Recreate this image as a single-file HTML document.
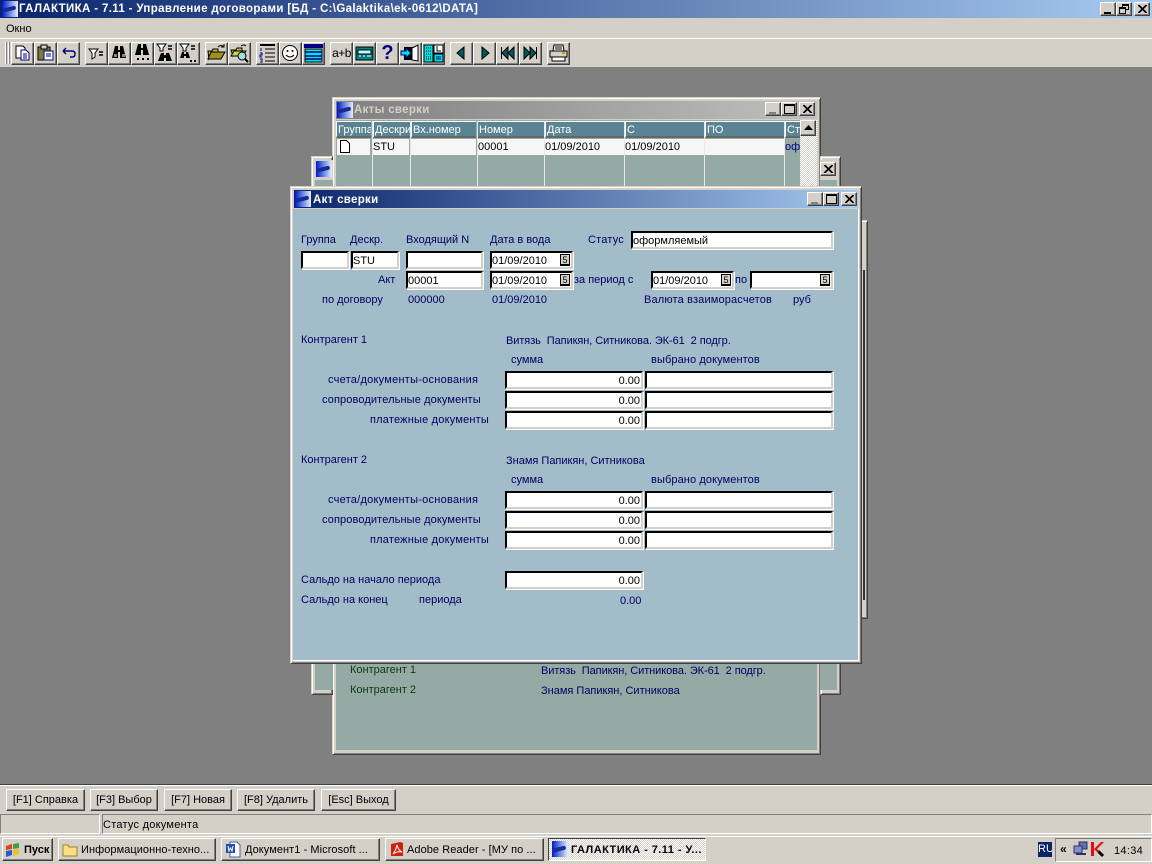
<!DOCTYPE html>
<html><head><meta charset="utf-8"><style>
html,body{margin:0;padding:0;width:1152px;height:864px;overflow:hidden;background:#808080;font-family:"Liberation Sans",sans-serif;font-size:11px;color:#000}
div,svg{position:absolute;box-sizing:border-box}
.t{white-space:pre;line-height:14px;height:14px;color:#000060;margin-top:1px}
.g{color:#0c3a0c}
.k{color:#000}
.b{background:#d4d0c8;border:1px solid;border-color:#fff #404040 #404040 #fff;box-shadow:inset -1px -1px 0 #808080;width:23px;height:23px;top:42px}
.bb{background:#d4d0c8;border:1px solid;border-color:#fff #404040 #404040 #fff;box-shadow:inset -1px -1px 0 #808080;height:22px;top:789px;text-align:center;line-height:20px;white-space:pre;letter-spacing:0}
.tb{background:#d4d0c8;border:1px solid;border-color:#fff #404040 #404040 #fff;box-shadow:inset -1px -1px 0 #808080;height:23px;top:838px;line-height:23px;white-space:pre;font-size:11px;letter-spacing:.06px}
.w{border:1px solid;border-color:#d4d0c8 #404040 #404040 #d4d0c8;background:#d4d0c8;box-shadow:inset 1px 1px 0 #fff,inset -1px -1px 0 #808080}
.f{background:#fff;border:2px solid;border-color:#000 #d4d0c8 #d4d0c8 #000;box-shadow:1px 1px 0 #fff;height:18px;line-height:16px;white-space:pre;color:#000;padding-left:0;width:10px}
.r{text-align:right;padding-right:1px}
.d{width:83px}
.c{position:absolute;right:1px;top:1px;width:10px;height:12px;border:1px solid #000;border-width:1px 1px 2px 1px;background:#d4d0c8;font-size:9px;line-height:10px;text-align:center}
.wb{background:#d4d0c8;border:1px solid;border-color:#fff #404040 #404040 #fff;box-shadow:inset -1px -1px 0 #808080;width:16px;height:14px}
.ic{width:16px;height:16px;background:linear-gradient(90deg,#0018d0,#6080e0 45%,#e8ecff);overflow:hidden}
.ic:after{content:"";position:absolute;left:1px;top:6px;width:13px;height:4px;background:#1a2a90;transform:rotate(-14deg);border-radius:2px}
.th{background:#5a8494;color:#fff;height:17px;top:121px;line-height:17px;white-space:pre;overflow:hidden;border-left:1px solid #fff;border-top:1px solid #fff;border-bottom:2px solid #666;padding-left:1px}
.tc{background:#f6f6f6;height:16px;top:139px;line-height:17px;white-space:pre;overflow:hidden;color:#000}
.v{background:#fff;width:1px;top:121px;height:65px;background:#e8e8e8}
</style></head><body>

<!-- main title -->
<div style="left:0;top:0;width:1152px;height:18px;background:linear-gradient(90deg,#0a246a,#a6caf0)"></div>
<div class="ic" style="left:2px;top:1px"></div>
<div style="left:19px;top:1px;height:16px;line-height:16px;color:#fff;font-weight:bold;font-size:11.5px;white-space:pre;letter-spacing:.35px">ГАЛАКТИКА - 7.11 - Управление договорами [БД - C:\Galaktika\ek-0612\DATA]</div>
<div class="wb" style="left:1100px;top:2px"><div style="left:3px;top:9px;width:7px;height:2px;background:#000"></div></div>
<div class="wb" style="left:1116px;top:2px"><div style="left:5px;top:1px;width:7px;height:6px;border:1px solid #000;border-top-width:2px"></div><div style="left:2px;top:4px;width:7px;height:7px;border:1px solid #000;border-top-width:2px;background:#d4d0c8"></div></div>
<div class="wb" style="left:1134px;top:2px"><svg style="left:3px;top:2px" width="9" height="8"><path d="M0 0L8 8M1 0L9 8M8 0L0 8M9 0L1 8" stroke="#000"/></svg></div>

<!-- menu -->
<div style="left:0;top:18px;width:1152px;height:20px;background:#d4d0c8"></div>
<div style="left:6px;top:22px;line-height:14px;color:#000;white-space:pre">Окно</div>
<!-- toolbar -->
<div style="left:0;top:38px;width:1152px;height:30px;background:#d4d0c8;border-top:1px solid #fff;border-bottom:1px solid #808080"></div>
<div style="left:5px;top:42px;width:2px;height:22px;background:#fff;border-right:1px solid #808080"></div>
<div style="left:8px;top:42px;width:2px;height:22px;background:#fff;border-right:1px solid #808080"></div>

<div class="b" style="left:11px"><svg width="21" height="21"><path d="M4 3h7l2 2v10H4z" fill="#fff" stroke="#000"/><path d="M9 7h5l3 3v7H9z" fill="#fff" stroke="#000080"/><path d="M11 11h4M11 13h4M11 15h4" stroke="#000080"/></svg></div>
<div class="b" style="left:34px"><svg width="21" height="21"><path d="M3 4h12v13H3z" fill="#807840" stroke="#000"/><path d="M6 2h6v4H6z" fill="#d4d0c8" stroke="#000"/><path d="M9 8h9v9H9z" fill="#fff" stroke="#000080"/><path d="M11 11h5M11 13h5" stroke="#000080"/></svg></div>
<div class="b" style="left:57px"><svg width="21" height="21"><path d="M5 8l3-3M5 8l3 3M5 8h9q3 0 3 3t-3 3h-2" fill="none" stroke="#000080" stroke-width="1.4"/></svg></div>

<div class="b" style="left:85px"><svg width="21" height="21"><path d="M3 6h9L9 10v4l-3 2v-6z" fill="#fff" stroke="#000"/><path d="M13 9h4M13 12h4" stroke="#000" stroke-width="1.4"/></svg></div>
<div class="b" style="left:108px"><svg width="21" height="21"><path d="M6 3h3v4h2V3h3l3 12h-6V9h-2v6H3z" fill="#000"/><path d="M5 11h3v3H5zM13 11h3v3h-3z" fill="#888"/></svg></div>
<div class="b" style="left:131px"><svg width="21" height="21"><path d="M6 1h3v4h2V1h3l3 11h-6V7h-2v5H3z" fill="#000"/><path d="M5 15h2v2H5zM10 15h2v2h-2zM15 15h2v2h-2z" fill="#000"/></svg></div>
<div class="b" style="left:154px"><svg width="21" height="21"><path d="M2 1h9L8 5v3H5V5z" fill="#fff" stroke="#000"/><path d="M13 3h4M13 6h4" stroke="#000" stroke-width="1.4"/><path d="M6 10h3v2h2v-2h3l3 8h-6v-3H9v3H3z" fill="#000"/></svg></div>
<div class="b" style="left:177px"><svg width="21" height="21"><path d="M2 1h9L8 5v3H5V5z" fill="#fff" stroke="#000"/><path d="M13 3h4M13 6h4" stroke="#000" stroke-width="1.4"/><path d="M4 9h2v2h2V9h2l2 6H8v-2H6v2H2z" fill="#000"/><path d="M12 17h2v2h-2zM16 17h2v2h-2z" fill="#000"/></svg></div>

<div class="b" style="left:205px"><svg width="21" height="21"><path d="M2 8h4l1-2h5v3H6l-3 7z" fill="#c8b840" stroke="#000"/><path d="M2 16l3-7h14l-4 7z" fill="#a09020" stroke="#000"/><path d="M12 4q3-3 6 0M18 1v3h-3" fill="none" stroke="#000"/></svg></div>
<div class="b" style="left:228px"><svg width="21" height="21"><path d="M2 7h5l1-2h5v3H6l-2 5z" fill="#c8b840" stroke="#000"/><path d="M2 13l3-5h12l-3 5z" fill="#e0d050" stroke="#000"/><circle cx="13" cy="13" r="4" fill="#a0e0e0" stroke="#000"/><path d="M16 16l3 3" stroke="#000" stroke-width="2"/><path d="M12 3q3-2 5 0" fill="none" stroke="#000"/></svg></div>

<div class="b" style="left:256px"><svg width="21" height="21"><path d="M3 2h15" stroke="#000" stroke-width="2"/><path d="M8 6h10M8 10h10M8 14h10M8 18h10" stroke="#000"/><path d="M4 5v3M3 10h2v2H3v2h2M3 16h2v3H3" stroke="#000080" fill="none"/></svg></div>
<div class="b" style="left:279px"><svg width="21" height="21"><circle cx="10" cy="10" r="7.5" fill="#fff" stroke="#000"/><circle cx="7.5" cy="8" r="1"/><circle cx="12.5" cy="8" r="1"/><path d="M6 12q4 4 8 0" fill="none" stroke="#000"/></svg></div>
<div class="b" style="left:302px"><svg width="21" height="21"><path d="M1 1h19v4H1z" fill="#000080"/><path d="M2 6h17v13H2z" fill="#00e0e0" stroke="#000"/><path d="M2 9h17M2 13h17M2 16h17" stroke="#000080" stroke-width="1.6"/></svg></div>

<div class="b" style="left:330px;font-size:12px;text-align:center;line-height:20px;white-space:pre;letter-spacing:-.5px">a+b</div>
<div class="b" style="left:353px"><svg width="21" height="21"><path d="M2 4h17v13H2z" fill="#008080" stroke="#000"/><path d="M4 7h13v4H4z" fill="#c0ffff" stroke="#000"/><path d="M5 13h2M9 13h2M13 13h4" stroke="#fff"/></svg></div>
<div class="b" style="left:376px;color:#000080;font:bold 20px/20px 'Liberation Sans',sans-serif;text-align:center">?</div>
<div class="b" style="left:399px"><svg width="21" height="21"><path d="M4 4h12v13H4z" fill="#000"/><path d="M12 5l6-3v16l-6-1z" fill="#fff" stroke="#000"/><path d="M1 8h5V5l5 5-5 5v-3H1z" fill="#00e0e0" stroke="#000080"/></svg></div>
<div class="b" style="left:422px"><svg width="21" height="21"><path d="M1 2h9v17H1z" fill="#00e0e0" stroke="#000"/><path d="M3 5h5M3 8h5M3 11h5M3 14h5M3 16h5" stroke="#000" stroke-dasharray="1 1"/><path d="M11 2h9v8h-9z" fill="#fff" stroke="#000"/><path d="M14 3v5h4" fill="none" stroke="#000"/><path d="M11 11h9v8h-9z" fill="#00e0e0" stroke="#000"/><path d="M13 14h5M13 16h5" stroke="#000080"/></svg></div>

<div class="b" style="left:450px"><svg width="21" height="21"><path d="M13 4v12l-7-6z" fill="#005860" stroke="#000"/></svg></div>
<div class="b" style="left:473px"><svg width="21" height="21"><path d="M8 4v12l7-6z" fill="#005860" stroke="#000"/></svg></div>
<div class="b" style="left:496px"><svg width="21" height="21"><path d="M4.500 4v12" stroke="#000"/><path d="M11 4v12l-6-6zM17 4v12l-6-6z" fill="#005860" stroke="#000"/></svg></div>
<div class="b" style="left:519px"><svg width="21" height="21"><path d="M16.500 4v12" stroke="#000"/><path d="M4 4v12l6-6zM10 4v12l6-6z" fill="#005860" stroke="#000"/></svg></div>
<div class="b" style="left:547px"><svg width="21" height="21"><path d="M6 2h9l1 6H5z" fill="#fff" stroke="#000"/><path d="M7 4h7M7 6h7" stroke="#000"/><path d="M2 8h17v6H2z" fill="#d4d0c8" stroke="#000"/><path d="M4 14h13v4H4z" fill="#fff" stroke="#000"/><path d="M14 10h3" stroke="#c0a000" stroke-width="2"/></svg></div>

<!-- far window right edge -->
<div class="w" style="left:400px;top:220px;width:468px;height:399px"></div>
<div style="left:863px;top:270px;width:2px;height:330px;background:#333"></div>

<!-- back window: Акты сверки -->
<div class="w" style="left:332px;top:97px;width:489px;height:658px"></div>
<div style="left:336px;top:101px;width:481px;height:18px;background:linear-gradient(90deg,#808080,#c0c0c0)"></div>
<div class="ic" style="left:337px;top:102px"></div>
<div style="left:354px;top:103px;line-height:15px;color:#d4d0c8;font-weight:bold;font-size:11.5px;white-space:pre;letter-spacing:.3px">Акты сверки</div>
<div class="wb" style="left:765px;top:102px"><div style="left:3px;top:9px;width:7px;height:2px;background:#808080"></div></div>
<div class="wb" style="left:781px;top:102px"><div style="left:2px;top:1px;width:11px;height:10px;border:1px solid #000;border-top-width:2px"></div></div>
<div class="wb" style="left:799px;top:102px"><svg style="left:3px;top:2px" width="9" height="8"><path d="M0 0L8 8M1 0L9 8M8 0L0 8M9 0L1 8" stroke="#000"/></svg></div>
<div style="left:336px;top:120px;width:481px;height:630px;background:#95aaa5"></div>
<div class="th" style="left:336px;width:35px">Группа</div>
<div class="th" style="left:373px;width:37px">Дескрипт</div>
<div class="th" style="left:411px;width:65px">Вх.номер</div>
<div class="th" style="left:477px;width:67px">Номер</div>
<div class="th" style="left:545px;width:79px">Дата</div>
<div class="th" style="left:625px;width:79px">С</div>
<div class="th" style="left:705px;width:79px">ПО</div>
<div class="th" style="left:785px;width:15px">Ст</div>
<div class="tc" style="left:337px;width:33px"><svg style="left:2px;top:1px" width="12" height="14"><path d="M1.500 .5h6l3 3v9h-9z" fill="#fff" stroke="#000"/></svg></div>
<div class="tc" style="left:373px;width:36px">STU</div>
<div class="tc" style="left:411px;width:65px"></div>
<div class="tc" style="left:478px;width:66px">00001</div>
<div class="tc" style="left:545px;width:79px">01/09/2010</div>
<div class="tc" style="left:625px;width:79px">01/09/2010</div>
<div class="tc" style="left:705px;width:79px"></div>
<div style="left:785px;top:139px;width:15px;height:16px;line-height:17px;color:#000080;background:#95aaa5;overflow:hidden">оф</div>
<div class="v" style="left:372px"></div><div class="v" style="left:410px"></div><div class="v" style="left:477px"></div><div class="v" style="left:544px"></div><div class="v" style="left:624px"></div><div class="v" style="left:704px"></div><div class="v" style="left:784px"></div>
<div style="left:800px;top:120px;width:17px;height:70px;background:repeating-conic-gradient(#d4d0c8 0 25%,#fff 0 50%) 0 0/2px 2px"></div>
<div class="wb" style="left:800px;top:120px;width:16px;height:16px"><svg style="left:3px;top:4px" width="9" height="5"><path d="M4.500 0L9 5H0z"/></svg></div>

<!-- middle window -->
<div class="w" style="left:311px;top:156px;width:22px;height:539px"></div>
<div style="left:315px;top:160px;width:18px;height:20px;background:#d4d0c8"></div>
<div class="ic" style="left:316px;top:161px"></div>
<div style="left:315px;top:180px;width:18px;height:510px;background:#95aaa5"></div>
<div class="w" style="left:820px;top:156px;width:21px;height:539px"></div>
<div style="left:820px;top:160px;width:17px;height:530px;background:#95aaa5"></div>
<div style="left:820px;top:160px;width:17px;height:20px;background:#d4d0c8"></div>
<div class="wb" style="left:820px;top:162px"><svg style="left:3px;top:2px" width="9" height="8"><path d="M0 0L8 8M1 0L9 8M8 0L0 8M9 0L1 8" stroke="#000"/></svg></div>

<div class="t g" style="left:350px;top:662px">Контрагент 1</div>
<div class="t g" style="left:350px;top:682px">Контрагент 2</div>
<div class="t" style="left:541px;top:663px;letter-spacing:-.07px">Витязь  Папикян, Ситникова. ЭК-61  2 подгр.</div>
<div class="t" style="left:541px;top:683px">Знамя Папикян, Ситникова</div>

<!-- front window -->
<div class="w" style="left:290px;top:186px;width:572px;height:478px"></div>
<div style="left:294px;top:190px;width:564px;height:18px;background:linear-gradient(90deg,#0a246a,#a6caf0)"></div>
<div class="ic" style="left:295px;top:191px"></div>
<div style="left:313px;top:193px;line-height:15px;color:#fff;font-weight:bold;font-size:11.5px;white-space:pre;letter-spacing:.3px">Акт сверки</div>
<div class="wb" style="left:807px;top:192px"><div style="left:3px;top:9px;width:7px;height:2px;background:#808080"></div></div>
<div class="wb" style="left:823px;top:192px"><div style="left:2px;top:1px;width:11px;height:10px;border:1px solid #000;border-top-width:2px"></div></div>
<div class="wb" style="left:841px;top:192px"><svg style="left:3px;top:2px" width="9" height="8"><path d="M0 0L8 8M1 0L9 8M8 0L0 8M9 0L1 8" stroke="#000"/></svg></div>
<div style="left:293px;top:209px;width:566px;height:452px;background:#a3bcc9;border-right:1px solid #fff;border-bottom:1px solid #fff"></div>

<div class="t" style="left:301px;top:232px">Группа</div>
<div class="t" style="left:350px;top:232px">Дескр.</div>
<div class="t" style="left:406px;top:232px">Входящий N</div>
<div class="t" style="left:490px;top:232px">Дата в вода</div>
<div class="t" style="left:588px;top:232px;letter-spacing:.2px">Статус</div>
<div class="f" style="left:631px;top:231px;width:202px">оформляемый</div>

<div class="f" style="left:301px;top:251px;width:48px"></div>
<div class="f" style="left:351px;top:251px;width:48px">STU</div>
<div class="f" style="left:406px;top:251px;width:77px"></div>
<div class="f d" style="left:490px;top:251px">01/09/2010<div class="c">5</div></div>

<div class="t" style="left:378px;top:272px">Акт</div>
<div class="f" style="left:406px;top:271px;width:77px">00001</div>
<div class="f d" style="left:490px;top:271px">01/09/2010<div class="c">5</div></div>
<div class="t" style="left:574px;top:272px">за период с</div>
<div class="f d" style="left:651px;top:271px">01/09/2010<div class="c">5</div></div>
<div class="t" style="left:735px;top:272px">по</div>
<div class="f d" style="left:750px;top:271px">&nbsp;<div class="c">5</div></div>

<div class="t" style="left:322px;top:292px">по договору</div>
<div class="t" style="left:408px;top:292px">000000</div>
<div class="t" style="left:492px;top:292px">01/09/2010</div>
<div class="t" style="left:644px;top:292px;letter-spacing:.16px">Валюта взаиморасчетов</div>
<div class="t" style="left:793px;top:292px">руб</div>

<div class="t" style="left:301px;top:332px">Контрагент 1</div>
<div class="t" style="left:506px;top:333px;letter-spacing:-.07px">Витязь  Папикян, Ситникова. ЭК-61  2 подгр.</div>
<div class="t" style="left:511px;top:352px">сумма</div>
<div class="t" style="left:651px;top:352px;letter-spacing:.1px">выбрано документов</div>
<div class="t" style="left:328px;top:372px;letter-spacing:.25px">счета/документы-основания</div>
<div class="t" style="left:322px;top:392px;letter-spacing:.12px">сопроводительные документы</div>
<div class="t" style="left:370px;top:412px;letter-spacing:.2px">платежные документы</div>
<div class="f r" style="left:505px;top:371px;width:138px">0.00</div><div class="f" style="left:645px;top:371px;width:188px"></div>
<div class="f r" style="left:505px;top:391px;width:138px">0.00</div><div class="f" style="left:645px;top:391px;width:188px"></div>
<div class="f r" style="left:505px;top:411px;width:138px">0.00</div><div class="f" style="left:645px;top:411px;width:188px"></div>

<div class="t" style="left:301px;top:452px">Контрагент 2</div>
<div class="t" style="left:506px;top:453px">Знамя Папикян, Ситникова</div>
<div class="t" style="left:511px;top:472px">сумма</div>
<div class="t" style="left:651px;top:472px;letter-spacing:.1px">выбрано документов</div>
<div class="t" style="left:328px;top:492px;letter-spacing:.25px">счета/документы-основания</div>
<div class="t" style="left:322px;top:512px;letter-spacing:.12px">сопроводительные документы</div>
<div class="t" style="left:370px;top:532px;letter-spacing:.2px">платежные документы</div>
<div class="f r" style="left:505px;top:491px;width:138px">0.00</div><div class="f" style="left:645px;top:491px;width:188px"></div>
<div class="f r" style="left:505px;top:511px;width:138px">0.00</div><div class="f" style="left:645px;top:511px;width:188px"></div>
<div class="f r" style="left:505px;top:531px;width:138px">0.00</div><div class="f" style="left:645px;top:531px;width:188px"></div>

<div class="t" style="left:301px;top:572px">Сальдо на начало периода</div>
<div class="f r" style="left:505px;top:571px;width:138px">0.00</div>
<div class="t" style="left:301px;top:592px">Сальдо на конец</div>
<div class="t" style="left:419px;top:592px">периода</div>
<div class="t" style="left:620px;top:593px">0.00</div>

<!-- bottom -->
<div style="left:0;top:784px;width:1152px;height:51px;background:#d4d0c8;border-top:1px solid #404040;box-shadow:inset 0 1px 0 #fff"></div>
<div class="bb" style="left:6px;width:79px">[F1] Справка</div>
<div class="bb" style="left:90px;width:68px">[F3] Выбор</div>
<div class="bb" style="left:164px;width:68px">[F7] Новая</div>
<div class="bb" style="left:237px;width:78px">[F8] Удалить</div>
<div class="bb" style="left:321px;width:75px">[Esc] Выход</div>
<div style="left:0;top:814px;width:100px;height:20px;border:1px solid;border-color:#808080 #fff #fff #808080"></div>
<div style="left:102px;top:814px;width:1050px;height:20px;border:1px solid;border-color:#808080 #fff #fff #808080;line-height:20px;white-space:pre;letter-spacing:.25px">Статус документа</div>

<!-- taskbar -->
<div style="left:0;top:835px;width:1152px;height:29px;background:#d4d0c8;border-top:1px solid #d4d0c8;box-shadow:inset 0 1px 0 #fff"></div>
<div class="tb" style="left:2px;width:51px;font-weight:bold;padding-left:21px;letter-spacing:0;color:#000">Пуск<svg style="left:2px;top:3px" width="16" height="16"><path d="M1 4l6-2v5l-6 1z" fill="#e04020"/><path d="M8 2l6-1v5l-6 1z" fill="#40a040"/><path d="M1 9l6-1v5l-6 2z" fill="#2060d0"/><path d="M8 8l6-1v5l-6 2z" fill="#f0c020"/></svg></div>
<div class="tb" style="left:58px;width:158px;padding-left:22px">Информационно-техно...<svg style="left:3px;top:2px" width="17" height="17"><path d="M1 4h5l1 2h8v9H1z" fill="#f8e088" stroke="#a08020"/></svg></div>
<div class="tb" style="left:221px;width:159px;padding-left:23px">Документ1 - Microsoft ...<svg style="left:3px;top:2px" width="17" height="17"><path d="M5 1h7l3 3v12H5z" fill="#fff" stroke="#4060a0"/><path d="M1 3h9v9H1z" fill="#2050b0"/><path d="M3 5l1 5 1.500-3 1.500 3 1-5" fill="none" stroke="#fff"/></svg></div>
<div class="tb" style="left:385px;width:159px;padding-left:21px">Adobe Reader - [МУ по ...<svg style="left:3px;top:2px" width="17" height="17"><path d="M2 3l9-2 3 1v13H2z" fill="#d02010"/><path d="M4 13q3-4 4-9 1 5 5 7-5-1-9 2z" fill="none" stroke="#fff"/></svg></div>
<div style="left:548px;top:838px;width:158px;height:23px;border:1px solid;border-color:#404040 #fff #fff #404040;background:repeating-conic-gradient(#d4d0c8 0 25%,#fff 0 50%) 0 0/2px 2px;line-height:23px;white-space:pre;font-weight:bold;padding-left:22px;letter-spacing:.45px">ГАЛАКТИКА - 7.11 - У...</div>
<div class="ic" style="left:552px;top:841px"></div>
<div style="left:1038px;top:842px;width:14px;height:15px;background:#0a246a;color:#fff;font-size:11px;line-height:15px;overflow:hidden;text-align:center">RU</div>
<div style="left:1055px;top:838px;width:97px;height:24px;border:1px solid;border-color:#808080 #fff #fff #808080"></div>
<div style="left:1060px;top:841px;font-weight:bold;line-height:16px;font-size:12px;color:#000">«</div>
<svg style="left:1073px;top:841px" width="17" height="16"><path d="M6 1h8v7H6z" fill="#6070b0" stroke="#303060"/><path d="M1 5h8v7H1z" fill="#8090d0" stroke="#303060"/><path d="M3 13h10" stroke="#303060" stroke-width="2"/></svg>
<svg style="left:1090px;top:841px" width="16" height="16"><path d="M1 1h3v14H1z" fill="#e01010"/><path d="M4 8l7-7h3L7 8l7 6-3 1z" fill="#e01010"/><path d="M9 9l5 5-2 2-4-4z" fill="#000"/></svg>
<div style="left:1114px;top:844px;line-height:14px;color:#000;white-space:pre;letter-spacing:.3px">14:34</div>
</body></html>
